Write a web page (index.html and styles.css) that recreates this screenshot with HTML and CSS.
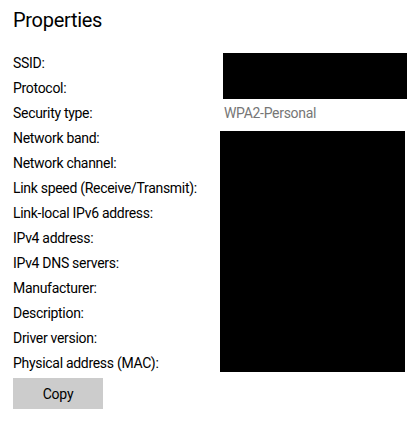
FILE: index.html
```html
<!DOCTYPE html>
<html>
<head>
<meta charset="utf-8">
<link rel="stylesheet" href="styles.css">
</head>
<body>
<main class="page">
  <h1 class="title">Properties</h1>
  <div class="props">
    <div class="label">SSID:</div>
    <div class="redact r1"></div>
    <div class="label">Protocol:</div>
    <div class="label">Security type:</div>
    <div class="value">WPA2-Personal</div>
    <div class="label">Network band:</div>
    <div class="redact r2"></div>
    <div class="label">Network channel:</div>
    <div class="label">Link speed (Receive/Transmit):</div>
    <div class="label">Link-local IPv6 address:</div>
    <div class="label">IPv4 address:</div>
    <div class="label">IPv4 DNS servers:</div>
    <div class="label">Manufacturer:</div>
    <div class="label">Description:</div>
    <div class="label">Driver version:</div>
    <div class="label">Physical address (MAC):</div>
  </div>
  <button class="copy">Copy</button>
</main>
</body>
</html>
```
FILE: styles.css
```css
html, body { margin: 0; padding: 0; background: #ffffff; }
body { font-family: Roboto, "Open Sans", sans-serif; color: #000; }
.page { padding: 6px 13px 0 13px; }
.title { font-size: 20px; font-weight: 400; margin: 0; line-height: 28px; letter-spacing: -0.3px; }
.props {
  display: grid;
  grid-template-columns: 210px 184px;
  grid-auto-rows: 25px;
  margin-top: 16px;
  font-size: 14px;
  letter-spacing: -0.3px;
}
.label { grid-column: 1; line-height: 25px; padding-top: 1px; white-space: nowrap; }
.value { grid-column: 2; grid-row: 3; line-height: 25px; padding-top: 1px; color: #767676; padding-left: 1px; }
.redact { background: #000; grid-column: 2; }
.r1 { grid-row: 1 / 3; margin: 3px 0 1px 0; }
.r2 { grid-row: 4 / 14; margin: 6px 2px 3px -3px; }
.copy {
  margin-top: 3px;
  width: 90px; height: 31px;
  background: #cccccc; border: none; border-radius: 0;
  font-family: inherit; font-size: 14px; letter-spacing: -0.2px; color: #000; padding: 0;
}
```
